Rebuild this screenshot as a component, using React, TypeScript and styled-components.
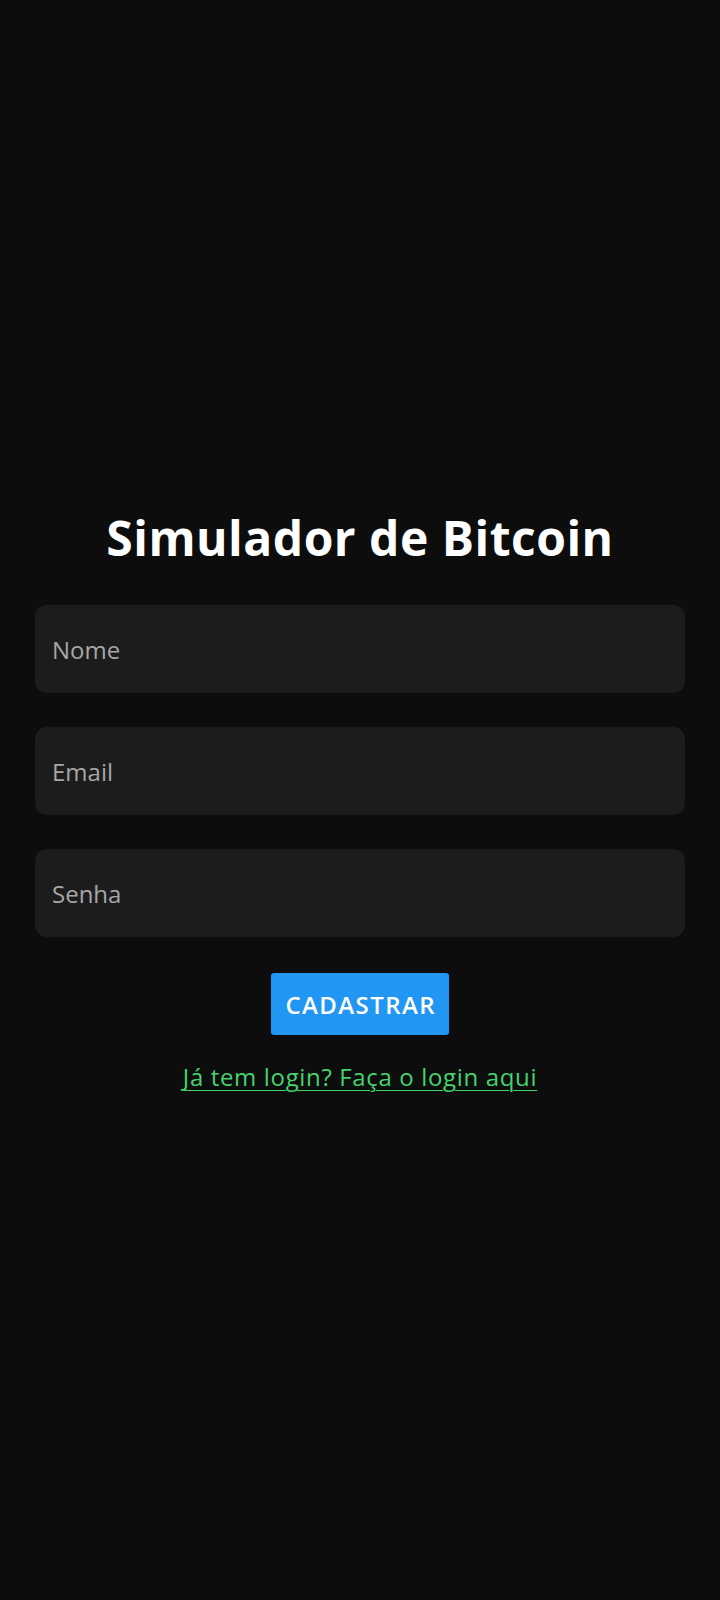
import React from "react";
import styled, { createGlobalStyle } from "styled-components";

const GlobalStyle = createGlobalStyle`
  html, body {
    margin: 0;
    padding: 0;
    background: #0d0d0d;
  }
  * { box-sizing: border-box; }
`;

const Page = styled.main`
  min-height: 100vh;
  display: flex;
  flex-direction: column;
  justify-content: center;
  align-items: stretch;
  padding: 0 35px;
  font-family: "Open Sans", Lato, sans-serif;
`;

const Title = styled.h1`
  margin: 0 0 38px;
  font-size: 48px;
  line-height: 58px;
  font-weight: 700;
  letter-spacing: 0.5px;
  color: #ffffff;
  text-align: center;
`;

const Form = styled.form`
  display: flex;
  flex-direction: column;
  align-items: center;
  gap: 34px;
`;

const Field = styled.input`
  width: 100%;
  height: 88px;
  border: none;
  outline: none;
  border-radius: 12px;
  background: #1c1c1c;
  padding: 0 17px;
  font-family: inherit;
  font-size: 24px;
  color: #e5e5e5;

  &::placeholder {
    color: #a6a6a6;
  }
`;

const SubmitButton = styled.button`
  margin-top: 2px;
  height: 62px;
  width: 178px;
  padding: 0 0 0 1.4px;
  border: none;
  border-radius: 3px;
  background: #2196f3;
  color: #ffffff;
  font-family: inherit;
  font-size: 24px;
  font-weight: 600;
  letter-spacing: 1.4px;
  cursor: pointer;
`;

const LoginLink = styled.a`
  display: block;
  margin-top: 27px;
  text-align: center;
  font-size: 24px;
  line-height: 29px;
  letter-spacing: 0.65px;
  color: #45d26e;
  text-decoration: underline;
  text-underline-offset: 4px;
  text-decoration-thickness: 1px;
`;

export default function App() {
  return (
    <>
      <GlobalStyle />
      <Page>
        <Title>Simulador de Bitcoin</Title>
        <Form onSubmit={(e) => e.preventDefault()}>
          <Field type="text" placeholder="Nome" />
          <Field type="email" placeholder="Email" />
          <Field type="password" placeholder="Senha" />
          <SubmitButton type="submit">CADASTRAR</SubmitButton>
        </Form>
        <LoginLink href="#">Já tem login? Faça o login aqui</LoginLink>
      </Page>
    </>
  );
}
